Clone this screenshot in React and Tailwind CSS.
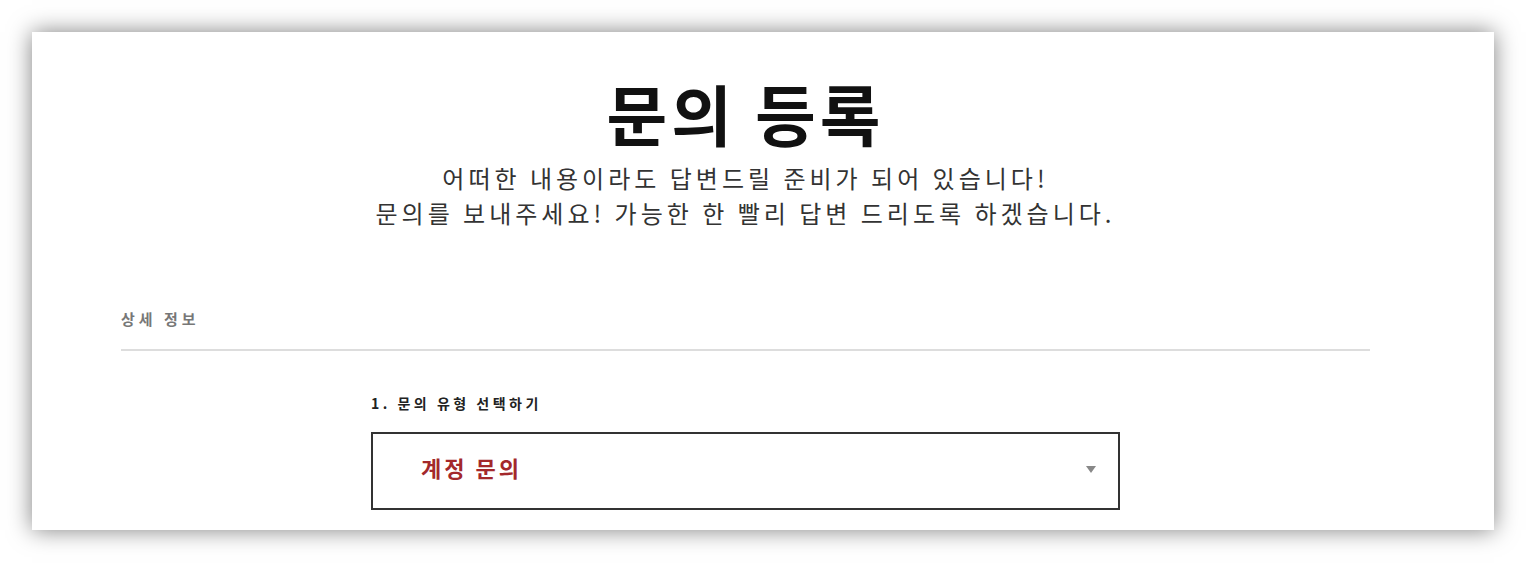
import React from 'react';

const font = { fontFamily: '"Noto Sans CJK KR", "Noto Sans", sans-serif' };

function SelectBox({ value }) {
    return (
        <div className="flex h-[78px] w-[749px] items-center justify-between border-2 border-[#333] bg-white pl-[48px] pr-[22px]">
            <span className="mb-[6px] text-[22px] font-bold tracking-[3px] text-[#a3282b]">{value}</span>
            <span className="mb-[2px] h-0 w-0 border-x-[5px] border-t-[7px] border-x-transparent border-t-[#888]" />
        </div>
    );
}

export default function App() {
    return (
        <div className="min-h-[563px] bg-white p-[32px]" style={font}>
            <div className="h-[498px] w-[1462px] overflow-hidden bg-white shadow-[0_0_22px_rgba(0,0,0,0.5)]">
                <div className="ml-[89px] w-[1249px]">
                    <div className="flex flex-col items-center pt-[40px]">
                        <h1 className="text-[66px] font-bold leading-[80px] tracking-[4px] text-[#111]">문의 등록</h1>
                        <p className="mt-[8px] text-center text-[24px] leading-[35px] tracking-[4px] text-[#333]">
                            어떠한 내용이라도 답변드릴 준비가 되어 있습니다!
                            <br />
                            문의를 보내주세요! 가능한 한 빨리 답변 드리도록 하겠습니다.
                        </p>
                    </div>

                    <div className="mt-[76px] border-b-2 border-[#ddd] pb-[18px]">
                        <span className="text-[15px] font-bold tracking-[4px] text-[#777]">상세 정보</span>
                    </div>

                    <div className="mx-auto mt-[42px] w-[749px]">
                        <div className="mb-[18px] text-[14px] font-bold tracking-[3.5px] text-[#222]">1. 문의 유형 선택하기</div>
                        <SelectBox value="계정 문의" />
                    </div>
                </div>
            </div>
        </div>
    );
}
